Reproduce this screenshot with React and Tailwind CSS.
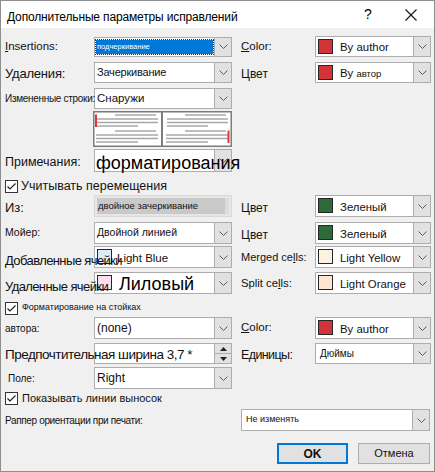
import React from "react";

function Chevron() {
  return (
    <svg width="9" height="5" viewBox="0 0 9 5">
      <polyline points="0.5,0.5 4.5,4.5 8.5,0.5" fill="none" stroke="#5c5c5c" strokeWidth="1" />
    </svg>
  );
}

function Combo({ w = "w-[138px]", h = "h-[21px]", children }) {
  return (
    <div className={`${w} ${h} shrink-0 flex border border-[#adadad] bg-white`}>
      <div className="flex-1 min-w-0 flex items-center relative">{children}</div>
      <div className="w-[17px] shrink-0 flex items-center justify-center bg-[#e1e1e1] border-l border-[#adadad]">
        <Chevron />
      </div>
    </div>
  );
}

function SwatchCombo({ color, children, h = "h-[21px]" }) {
  return (
    <Combo w="w-[116px]" h={h}>
      <div className="flex h-full w-full">
        <div className={`w-[15px] h-[15px] ml-[2px] mt-[2px] border border-[#262626] shrink-0 ${color}`} />
        <div className="ml-[7px] self-end mb-[1px] text-[11.4px] leading-[15px] text-[#111] whitespace-nowrap">{children}</div>
      </div>
    </Combo>
  );
}

function Check({ children, className = "" }) {
  return (
    <div className={`flex items-center h-[16px] ${className}`}>
      <svg width="13" height="13" viewBox="0 0 13 13" className="shrink-0">
        <rect x="0.5" y="0.5" width="12" height="12" fill="white" stroke="#333" />
        <polyline points="2.5,6.5 5,9 10.5,3.5" fill="none" stroke="#222" strokeWidth="1.2" />
      </svg>
      {children}
    </div>
  );
}

function Preview() {
  const line = "#a8a8a8";
  const rows = [4, 8, 11.5, 15, 20, 24, 27.5, 31];
  return (
    <svg width="139" height="36" viewBox="0 0 139 36">
      <rect x="0" y="0" width="139" height="36" fill="white" />
      <rect x="0.75" y="0.75" width="137.5" height="34.5" fill="none" stroke="#7d7d7d" strokeWidth="1.5" />
      <rect x="68" y="0" width="2" height="36" fill="#7d7d7d" />
      {[0, 70].map((ox) => (
        <g key={ox} stroke={line} strokeWidth="1.3">
          <line x1={ox + 22} x2={ox + 63} y1={rows[0]} y2={rows[0]} />
          <line x1={ox + 4} x2={ox + 65} y1={rows[1]} y2={rows[1]} />
          <line x1={ox + 4} x2={ox + 65} y1={rows[2]} y2={rows[2]} />
          <line x1={ox + 4} x2={ox + 45} y1={rows[3]} y2={rows[3]} />
          <line x1={ox + 22} x2={ox + 63} y1={rows[4]} y2={rows[4]} />
          <line x1={ox + 3} x2={ox + 65} y1={rows[5]} y2={rows[5]} />
          <line x1={ox + 3} x2={ox + 65} y1={rows[6]} y2={rows[6]} />
          <line x1={ox + 3} x2={ox + 45} y1={rows[7]} y2={rows[7]} />
        </g>
      ))}
      <rect x="2" y="3.5" width="2" height="12.5" fill="#e0353d" />
      <rect x="134.5" y="19.5" width="2" height="12.5" fill="#e0353d" />
    </svg>
  );
}

export default function App() {
  return (
    <div className="w-[435px] h-[472px] bg-[#f0f0f0] border border-[#8e8e8e] flex flex-col font-['Liberation_Sans',Arial,sans-serif] text-[#111] overflow-hidden">
      {/* title bar */}
      <div className="h-[27px] bg-white flex items-center shrink-0">
        <div className="pl-[6px] pt-[4px] text-[12px] tracking-[-0.15px] text-black flex-1 whitespace-nowrap">Дополнительные параметры исправлений</div>
        <div className="w-[46px] text-center text-[14px] text-black pl-[6px]">?</div>
        <div className="w-[46px] flex justify-center">
          <svg width="12" height="12" viewBox="0 0 12 12">
            <path d="M0.5 0.5 L11.5 11.5 M11.5 0.5 L0.5 11.5" stroke="#111" strokeWidth="1.1" />
          </svg>
        </div>
      </div>

      <div className="flex flex-col pl-[4px]">
        {/* insertions */}
        <div className="flex items-center h-[21px] mt-[8px]">
          <div className="w-[89px] shrink-0 text-[11.5px]"><span className="underline">I</span>nsertions:</div>
          <Combo h="h-[20px]">
            <div className="ml-[1px] mr-[1px] w-full h-[14px] bg-[#0078d7] outline outline-1 outline-dotted outline-[#333] flex items-center pl-[1px] text-[7.5px] text-white leading-none">подчеркивание</div>
          </Combo>
          <div className="w-[74px] ml-[9px] shrink-0 text-[11.5px]"><span className="underline">C</span>olor:</div>
          <SwatchCombo color="bg-[#d13438]">By author</SwatchCombo>
        </div>

        {/* deletions */}
        <div className="flex items-center h-[21px] mt-[5px]">
          <div className="w-[89px] shrink-0 text-[13px] tracking-[-0.2px] mt-[2px]">Удаления:</div>
          <Combo>
            <span className="pl-[2px] text-[11px] tracking-[-0.2px]">Зачеркивание</span>
          </Combo>
          <div className="w-[74px] ml-[9px] shrink-0 text-[12px] mt-[2px]">Цвет</div>
          <SwatchCombo color="bg-[#d13438]">By <span className="text-[9.5px]">автор</span></SwatchCombo>
        </div>

        {/* changed lines */}
        <div className="flex items-center h-[21px] mt-[5px]">
          <div className="w-[89px] shrink-0 text-[10px] tracking-[-0.3px] whitespace-nowrap relative z-10">Измененные строки:</div>
          <Combo>
            <span className="pl-[2px] text-[11.5px]">Снаружи</span>
          </Combo>
        </div>

        {/* preview */}
        <div className="flex h-[36px] mt-[2px]">
          <div className="w-[88px] shrink-0" />
          <Preview />
        </div>

        {/* comments */}
        <div className="flex items-center h-[23px] mt-[2px]">
          <div className="w-[89px] shrink-0 text-[12.5px] mt-[4px]">Примечания:</div>
          <Combo h="h-[23px]">
            <span className="absolute left-[1px] top-0 text-[18px] leading-[27px] text-black whitespace-nowrap z-10">форматирования</span>
          </Combo>
        </div>

        {/* track moves */}
        <Check className="mt-[6px]">
          <span className="ml-[3px] text-[12.5px]">Учитывать перемещения</span>
        </Check>

        {/* moved from */}
        <div className="flex items-center h-[22px] mt-[1px]">
          <div className="w-[89px] shrink-0 text-[13px] mt-[3px]">Из:</div>
          <div className="w-[138px] h-[22px] shrink-0 flex items-center border border-[#d9d9d9] bg-[#e6e6e6] p-[2px]">
            <div className="flex-1 h-full bg-[#c9c9c9] flex items-center pl-[1px] text-[9.5px] whitespace-nowrap">двойное зачеркивание</div>
            <div className="w-[4px] h-full bg-[#dcdcdc]" />
          </div>
          <div className="w-[74px] ml-[9px] shrink-0 text-[12px] mt-[3px]">Цвет</div>
          <SwatchCombo color="bg-[#2e6a3a]" h="h-[22px]">Зеленый</SwatchCombo>
        </div>

        {/* moved to */}
        <div className="flex items-center h-[22px] mt-[5px]">
          <div className="w-[89px] shrink-0 text-[10.5px]">Мойер:</div>
          <Combo h="h-[22px]">
            <span className="pl-[2px] text-[10.5px]">Двойной линией</span>
          </Combo>
          <div className="w-[74px] ml-[9px] shrink-0 text-[12px] mt-[3px]">Цвет</div>
          <SwatchCombo color="bg-[#2e6a3a]" h="h-[22px]">Зеленый</SwatchCombo>
        </div>

        {/* inserted cells */}
        <div className="flex items-center h-[22px] mt-[2px]">
          <div className="w-[89px] shrink-0 text-[13px] tracking-[-0.6px] whitespace-nowrap relative z-10 mt-[8px]">Добавленные ячейки</div>
          <Combo h="h-[22px]">
            <div className="flex h-full w-full items-start">
              <div className="w-[15px] h-[15px] ml-[2px] mt-[2px] border border-[#262626] bg-[#dcedf8] shrink-0" />
              <div className="ml-[5px] mt-[3px] text-[11.5px] whitespace-nowrap">Light Blue</div>
            </div>
          </Combo>
          <div className="w-[74px] ml-[9px] shrink-0 text-[11px] whitespace-nowrap">Merged ce<span className="underline">l</span>ls:</div>
          <SwatchCombo color="bg-[#fdf2e1]" h="h-[22px]">Light Yellow</SwatchCombo>
        </div>

        {/* deleted cells */}
        <div className="flex items-center h-[22px] mt-[4px]">
          <div className="w-[89px] shrink-0 text-[13px] tracking-[-0.6px] whitespace-nowrap relative z-10 mt-[8px]">Удаленные ячейки</div>
          <Combo h="h-[22px]">
            <div className="flex h-full w-full items-start">
              <div className="w-[15px] h-[15px] ml-[2px] mt-[2px] border border-[#262626] bg-[#f9e0ee] shrink-0" />
              <div className="ml-[7px] -mt-[2px] text-[18px] text-black whitespace-nowrap relative z-20">Лиловый</div>
            </div>
          </Combo>
          <div className="w-[74px] ml-[9px] shrink-0 text-[11.3px] whitespace-nowrap">Split ce<span className="underline">l</span>ls:</div>
          <SwatchCombo color="bg-[#fde6cf]" h="h-[22px]">Light Orange</SwatchCombo>
        </div>

        {/* formatting */}
        <Check className="mt-[6px]">
          <span className="ml-[4px] text-[9px]">Форматирование на стойках</span>
        </Check>

        {/* author */}
        <div className="flex items-center h-[22px] mt-[1px]">
          <div className="w-[89px] shrink-0 text-[10px]">автора:</div>
          <Combo h="h-[22px]">
            <span className="pl-[2px] text-[12px]">(none)</span>
          </Combo>
          <div className="w-[74px] ml-[9px] shrink-0 text-[11.5px]"><span className="underline">C</span>olor:</div>
          <SwatchCombo color="bg-[#d13438]" h="h-[22px]">By author</SwatchCombo>
        </div>

        {/* preferred width */}
        <div className="flex items-center h-[21px] mt-[4px]">
          <div className="w-[89px] shrink-0 text-[13.5px] tracking-[-0.5px] whitespace-nowrap relative z-10 mt-[3px]">Предпочтительная ширина 3,7 *</div>
          <div className="w-[138px] h-[21px] shrink-0 flex border border-[#adadad] bg-white">
            <div className="flex-1" />
            <div className="w-[17px] flex flex-col border-l border-[#adadad]">
              <div className="flex-1 flex items-center justify-center bg-[#e1e1e1] border-b border-[#adadad]">
                <svg width="7" height="4" viewBox="0 0 7 4"><polygon points="0,4 3.5,0 7,4" fill="#222" /></svg>
              </div>
              <div className="flex-1 flex items-center justify-center bg-[#e1e1e1]">
                <svg width="7" height="4" viewBox="0 0 7 4"><polygon points="0,0 3.5,4 7,0" fill="#222" /></svg>
              </div>
            </div>
          </div>
          <div className="w-[74px] ml-[9px] shrink-0 text-[12.5px] tracking-[-0.6px] mt-[3px]">Единицы:</div>
          <Combo w="w-[116px]">
            <span className="pl-[4px] text-[10px]">Дюймы</span>
          </Combo>
        </div>

        {/* margin */}
        <div className="flex items-center h-[22px] mt-[3px]">
          <div className="w-[89px] shrink-0 text-[10px] pl-[3px]">Поле:</div>
          <Combo h="h-[22px]">
            <span className="pl-[2px] text-[12px]">Right</span>
          </Combo>
        </div>

        {/* callouts */}
        <Check className="mt-[1px]">
          <span className="ml-[4px] text-[11px]">Показывать линии выносок</span>
        </Check>

        {/* paper orientation */}
        <div className="flex items-center h-[22px] mt-[3px]">
          <div className="w-[236px] shrink-0 text-[10px] tracking-[-0.35px]">Раппер ориентации при печати:</div>
          <Combo w="w-[189px]" h="h-[22px]">
            <span className="pl-[4px] text-[9px]">Не изменять</span>
          </Combo>
        </div>

        {/* buttons */}
        <div className="flex justify-end h-[21px] mt-[12px] pr-[4px] gap-[10px]">
          <button className="w-[71px] h-[21px] bg-[#e1e1e1] border-2 border-[#0078d7] text-[12px] font-bold leading-none">OK</button>
          <button className="w-[72px] h-[21px] bg-[#e1e1e1] border border-[#adadad] text-[11px] leading-none">Отмена</button>
        </div>
      </div>
    </div>
  );
}
